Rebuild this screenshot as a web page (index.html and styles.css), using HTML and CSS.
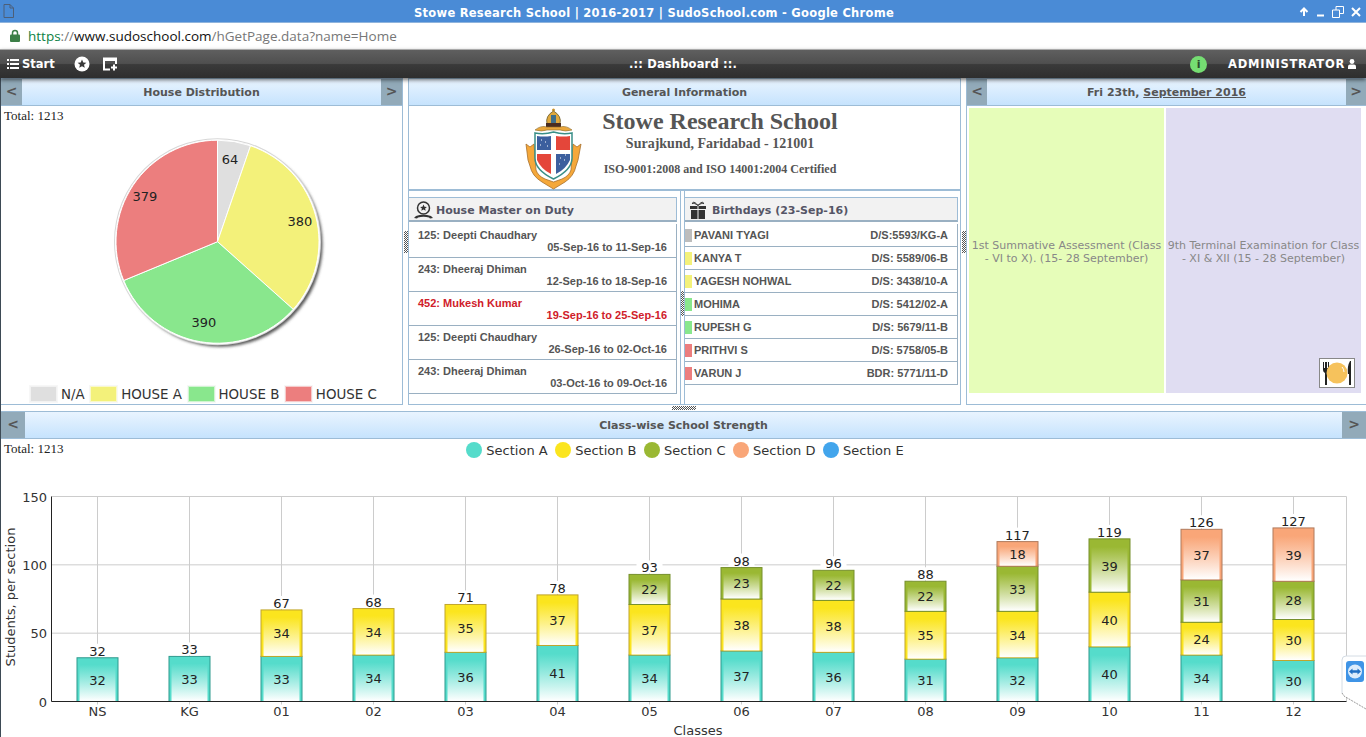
FILE: index.html
```html
<!DOCTYPE html>
<html lang="en">
<head>
  <meta charset="UTF-8" />
  <title>Stowe Research School | 2016-2017 | SudoSchool.com</title>
  <link rel="stylesheet" href="styles.css">
</head>
<body>
  <div class="window-bar">
    <svg class="doc-icon" width="11" height="14" viewBox="0 0 11 14"><path d="M1 .5h6l3.500 3.500v9.500h-9.500zM7 .5v3.500h3.500" fill="none" stroke="#4d5f78"/></svg>
    <span class="window-title">Stowe Research School | 2016-2017 | SudoSchool.com - Google Chrome</span>
    <div class="window-controls">
      <svg width="10" height="10" viewBox="0 0 10 10"><path d="M5 9V2M1.500 5 5 1.500 8.500 5" fill="none" stroke="#fff" stroke-width="2"/></svg>
      <svg width="9" height="10" viewBox="0 0 9 10"><path d="M1 8.500h7" stroke="#fff" stroke-width="2"/></svg>
      <svg width="12" height="12" viewBox="0 0 12 12"><path d="M.5 4h7v7.500h-7zM4 4V.5h7.500v7H7.500" fill="none" stroke="#fff"/></svg>
      <svg width="10" height="10" viewBox="0 0 10 10"><path d="M1 1l8 8M9 1 1 9" stroke="#fff" stroke-width="2"/></svg>
    </div>
  </div>

  <div class="address-bar">
    <svg class="lock" width="10" height="13" viewBox="0 0 10 13"><path d="M2.500 6V4a2.500 2.500 0 0 1 5 0v2" fill="none" stroke="#3c7f47" stroke-width="1.500"/><rect y="5.500" width="10" height="7.500" rx="1" fill="#3c7f47"/></svg>
    <span class="url"><span class="url-scheme">https</span><span class="url-dim">://</span><span class="url-host">www.sudoschool.com</span><span class="url-dim">/hGetPage.data?name=Home</span></span>
  </div>

  <nav class="app-bar">
    <div class="app-left">
      <span class="start">
        <svg width="12" height="10" viewBox="0 0 12 10"><path d="M0 1h2M3 1h9M0 5h2M3 5h9M0 9h2M3 9h9" stroke="#fff" stroke-width="2"/></svg>
        Start
      </span>
      <svg class="fav" width="16" height="16" viewBox="0 0 16 16"><circle cx="8" cy="8" r="7.500" fill="#fff"/><path d="M8 3.600l1.300 2.900 3.100.3-2.400 2 .8 3-2.800-1.600-2.800 1.600.8-3-2.400-2 3.100-.3z" fill="#3a3a3a"/></svg>
      <svg class="newwin" width="15" height="14" viewBox="0 0 15 14"><path d="M7 12.500H1V1.500h12V7" fill="none" stroke="#fff" stroke-width="2"/><path d="M1 2.500h12" stroke="#fff" stroke-width="3"/><path d="M11 7.500v6M8 10.500h6" stroke="#fff" stroke-width="2"/></svg>
    </div>
    <div class="app-title">.:: Dashboard ::.</div>
    <div class="app-right">
      <span class="info-dot">i</span>
      <span class="admin">ADMINISTRATOR</span>
      <svg width="8" height="10" viewBox="0 0 8 10"><circle cx="4" cy="2.500" r="2.400" fill="#fff"/><path d="M0 10V7.500Q0 5.500 2 5.500h4Q8 5.500 8 7.500V10z" fill="#fff"/></svg>
    </div>
  </nav>

  <main class="dashboard">
    <section class="top-row">
      <div class="panel panel-house">
        <header class="panel-head">
          <span class="nav-btn">&lt;</span>
          <span class="panel-title">House Distribution</span>
          <span class="nav-btn">&gt;</span>
        </header>
        <div class="panel-body pie-body">
          <div class="total">Total: 1213</div>
          <svg id="pie" class="pie" width="400" height="248" viewBox="0 123 400 248"></svg>
          <div class="pie-legend">
            <span class="pie-key"><i class="swatch sw-na"></i>N/A</span>
            <span class="pie-key"><i class="swatch sw-a"></i>HOUSE A</span>
            <span class="pie-key"><i class="swatch sw-b"></i>HOUSE B</span>
            <span class="pie-key"><i class="swatch sw-c"></i>HOUSE C</span>
          </div>
        </div>
      </div>

      <div class="resizer"><i class="grip-v"></i></div>

      <div class="panel panel-info">
        <header class="panel-head">
          <span class="panel-title">General Information</span>
        </header>
        <div class="school-banner">
          <svg class="crest" width="58" height="82" viewBox="0 0 58 82">
            <path d="M1 36l4 3 4-3 2 26q2 6 9 9l8.500 3 8.500-3q7-3 9-9l2-26 4 3 4-3-3 16-2 6q-2 10-11 16l-11.500 7-11.500-7Q7 68 5 58l-2-6z" fill="#f5a83a" stroke="#a8702c" stroke-width=".8"/>
            <circle cx="28.500" cy="2" r="1.500" fill="#c8922e"/>
            <path d="M22 16q-2-8 6.500-13 8.500 5 6.500 13z" fill="#e0a83c" stroke="#6a5a2a" stroke-width=".8"/>
            <rect x="26" y="7" width="5" height="9" fill="#3f6f8a"/>
            <rect x="21" y="15" width="15" height="4" fill="#4a2d20"/>
            <path d="M10 22q6-5 12-3h13q6-2 12 3-7 2-12 0H22q-5 2-12 0z" fill="#eaa73c" stroke="#8a6a2a" stroke-width=".6"/>
            <path d="M10 25q9 2 18.500-1 9.500 3 18.500 1v25q0 12-18.500 21Q10 62 10 50z" fill="#fff" stroke="#3a8f88" stroke-width="1.500"/>
            <path d="M12 28q7 1 14 0v14H12z" fill="#3c5f9e"/>
            <path d="M31 28q7 1 14 0v14H31z" fill="#e4463a"/>
            <path d="M12 46h14v20q-10-5-14-14z" fill="#e4463a"/>
            <path d="M31 46h14v6q-4 9-14 14z" fill="#3c5f9e"/>
            <path d="M16 32h1M20 34h1M15 37h1M22 38h1M35 50h1M39 52h1M34 56h1M40 47h1" stroke="#fff" stroke-width="1.200"/>
          </svg>
          <div class="school-text">
            <h1>Stowe Research School</h1>
            <p class="school-place">Surajkund, Faridabad - 121001</p>
            <p class="school-cert">ISO-9001:2008 and ISO 14001:2004 Certified</p>
          </div>
        </div>

        <div class="info-cols">
          <div class="info-col col-duty">
            <h3 class="list-head">
              <svg width="19" height="19" viewBox="0 0 19 19"><circle cx="9.500" cy="7" r="6" fill="none" stroke="#333" stroke-width="1.500"/><path d="M9.500 3.500l1 2.200 2.400.2-1.800 1.500.6 2.300-2.200-1.300-2.200 1.300.6-2.300-1.800-1.500 2.400-.2z" fill="#333"/><path d="M0 17l2-2q7-2.500 15 0l2 2-3 .5-1-1q-5.500-1.500-11 0l-1 1z" fill="#333"/></svg>
              House Master on Duty
            </h3>
            <ul class="duty-list">
              <li><span>125: Deepti Chaudhary</span><span class="dates">05-Sep-16 to 11-Sep-16</span></li>
              <li><span>243: Dheeraj Dhiman</span><span class="dates">12-Sep-16 to 18-Sep-16</span></li>
              <li class="current"><span>452: Mukesh Kumar</span><span class="dates">19-Sep-16 to 25-Sep-16</span></li>
              <li><span>125: Deepti Chaudhary</span><span class="dates">26-Sep-16 to 02-Oct-16</span></li>
              <li><span>243: Dheeraj Dhiman</span><span class="dates">03-Oct-16 to 09-Oct-16</span></li>
            </ul>
          </div>
          <div class="resizer-inner"><i class="grip-v grip-mid"></i></div>
          <div class="info-col col-birth">
            <h3 class="list-head">
              <svg width="18" height="18" viewBox="0 0 18 18"><path d="M1 5h7.500v3H1zM9.500 5H17v3H9.500zM2 9h6.500v9H2zM9.500 9H16v9H9.500z" fill="#333"/><path d="M9 4.500C6 .5 3 .5 3.500 3 4 1.500 7 3 9 4.500zM9 4.500C12 .5 15 .5 14.500 3 14 1.500 11 3 9 4.500z" fill="none" stroke="#333"/></svg>
              Birthdays (23-Sep-16)
            </h3>
            <ul class="birth-list">
              <li><i class="tag sw-grey"></i><span>PAVANI TYAGI</span><span>D/S:5593/KG-A</span></li>
              <li><i class="tag sw-a"></i><span>KANYA T</span><span>D/S: 5589/06-B</span></li>
              <li><i class="tag sw-a"></i><span>YAGESH NOHWAL</span><span>D/S: 3438/10-A</span></li>
              <li><i class="tag sw-b"></i><span>MOHIMA</span><span>D/S: 5412/02-A</span></li>
              <li><i class="tag sw-b"></i><span>RUPESH G</span><span>D/S: 5679/11-B</span></li>
              <li><i class="tag sw-c"></i><span>PRITHVI S</span><span>D/S: 5758/05-B</span></li>
              <li><i class="tag sw-c"></i><span>VARUN J</span><span>BDR: 5771/11-D</span></li>
            </ul>
          </div>
        </div>
      </div>

      <div class="resizer"><i class="grip-v"></i></div>

      <div class="panel panel-cal">
        <header class="panel-head">
          <span class="nav-btn">&lt;</span>
          <span class="panel-title">Fri 23th, <u>September 2016</u></span>
          <span class="nav-btn">&gt;</span>
        </header>
        <div class="cal-body">
          <div class="cal-cell cell-green">1st Summative Assessment (Class - VI to X). (15- 28 September)</div>
          <div class="cal-cell cell-lilac">
            9th Terminal Examination for Class - XI &amp; XII (15 - 28 September)
            <svg class="meal" width="36" height="30" viewBox="0 0 36 30">
              <rect x=".5" y=".5" width="35" height="29" fill="#fff" stroke="#888"/>
              <path d="M4 4v8q0 2 2 3v12h2V15q2-1 2-3V4H9v6H8V4H6v6H5V4z" fill="#222"/>
              <circle cx="18" cy="15" r="10.500" fill="#f6c25c"/>
              <path d="M23 9q2 2 2 5" fill="none" stroke="#fff"/>
              <path d="M31 3q-3 5-2 13h1v11h2V3z" fill="#222"/>
            </svg>
          </div>
        </div>
      </div>
    </section>

    <div class="resizer-h"><i class="grip-h"></i></div>

    <section class="panel panel-strength">
      <header class="panel-head head-wide">
        <span class="nav-btn">&lt;</span>
        <span class="panel-title">Class-wise School Strength</span>
        <span class="nav-btn">&gt;</span>
      </header>
      <div class="chart-top">
        <div class="total">Total: 1213</div>
        <div class="chart-legend">
          <span class="chart-key"><i class="dot dot-a"></i>Section A</span>
          <span class="chart-key"><i class="dot dot-b"></i>Section B</span>
          <span class="chart-key"><i class="dot dot-c"></i>Section C</span>
          <span class="chart-key"><i class="dot dot-d"></i>Section D</span>
          <span class="chart-key"><i class="dot dot-e"></i>Section E</span>
        </div>
      </div>
      <svg id="chart" class="chart" width="1365" height="274" viewBox="1 463 1365 274"></svg>
    </section>
  </main>

  <svg class="tv-tab" width="25" height="56" viewBox="0 0 25 56">
    <path d="M25 1H5Q1 1 1 5v33l2 3 22 13z" fill="#fff"/>
    <path d="M25 1H5Q1 1 1 5v33" fill="none" stroke="#d4dce4"/>
    <path d="M1 38l2 3 22 13" fill="none" stroke="#999" stroke-dasharray="2 1"/>
    <rect x="5" y="6" width="18" height="21" rx="3" fill="#3f94e6"/>
    <circle cx="14" cy="16.500" r="7" fill="#dcecfb"/>
    <path d="M8 16.500l3.500-3v1.800h5v-1.800l3.500 3-3.500 3v-1.800h-5v1.800z" fill="#1f6fc4"/>
  </svg>

  <script src="chart.js"></script>
</body>
</html>
```

FILE: styles.css
```css
* {
  box-sizing: border-box;
}

html, body {
  height: 737px;
}

body {
  margin: 0;
  overflow: hidden;
  background: #fff;
  font-family: "DejaVu Sans", sans-serif;
  color: #555;
  display: flex;
  flex-direction: column;
  position: relative;
}

/* browser chrome */
.window-bar {
  height: 23px;
  flex: none;
  background: #4a8bd6;
  border-bottom: 1px solid #8fb4dd;
  display: flex;
  align-items: center;
  justify-content: center;
  position: relative;
  padding-right: 58px;
  padding-top: 3px;
}

.doc-icon {
  position: absolute;
  left: 3px;
  top: 4px;
}

.window-title {
  color: #fff;
  font-weight: bold;
  font-size: 11.5px;
  letter-spacing: 0.26px;
}

.window-controls {
  position: absolute;
  right: 5px;
  top: 6px;
  display: flex;
  align-items: center;
  gap: 7px;
}

.address-bar {
  height: 26px;
  flex: none;
  background: #fff;
  display: flex;
  align-items: center;
  padding-left: 10px;
  padding-bottom: 1px;
  gap: 8px;
}

.url {
  font-family: "Open Sans", sans-serif;
  font-size: 13.5px;
  color: #777;
}

.url-scheme { color: #0b8043; }
.url-host { color: #111; }
.url-dim { color: #777; }

.app-bar {
  height: 29px;
  flex: none;
  background: linear-gradient(#5f5f5f, #4f4f4f 48%, #3a3a3a 52%, #2e2e2e);
  border-top: 1px solid #aaa;
  box-shadow: 0 2px 4px rgba(0, 0, 0, 0.55);
  display: grid;
  grid-template-columns: 1fr auto 1fr;
  align-items: center;
  color: #fff;
  font-weight: bold;
  font-size: 11.5px;
  position: relative;
  z-index: 2;
}

.app-left {
  display: flex;
  align-items: center;
  padding-left: 7px;
}

.start {
  display: flex;
  align-items: center;
  gap: 3px;
}

.fav { margin-left: 19px; }
.newwin { margin-left: 13px; }

.app-title {
  letter-spacing: 0.16px;
}

.app-right {
  display: flex;
  align-items: center;
  justify-content: flex-end;
  padding-right: 10px;
  gap: 3px;
}

.info-dot {
  width: 17px;
  height: 17px;
  border-radius: 50%;
  background: #75dd72;
  color: #2c4a2c;
  font-size: 11px;
  text-align: center;
  line-height: 17px;
  margin-right: 18px;
}

.admin {
  letter-spacing: 0.72px;
}

/* dashboard */
.dashboard {
  flex: 1;
  min-height: 0;
  display: flex;
  flex-direction: column;
  border-left: 1px solid #3d4a55;
}

.top-row {
  height: 327px;
  flex: none;
  display: flex;
}

.panel {
  border: 1px solid #9dbcd6;
  background: #fff;
  display: flex;
  flex-direction: column;
  min-width: 0;
  position: relative;
}

.panel-house { width: 402px; border-left: 0; }
.panel-info { width: 553px; }
.panel-cal { flex: 1; border-right: 0; }

.panel-head {
  height: 27px;
  flex: none;
  display: flex;
  align-items: stretch;
  background: linear-gradient(#e9f4ff, #c6e3fd);
  border-bottom: 1px solid #9dbcd6;
  font-size: 11px;
  font-weight: bold;
  color: #555;
}

.panel-title {
  flex: 1;
  text-align: center;
  line-height: 27px;
}

.nav-btn {
  width: 21px;
  background: #92aab9;
  color: #555;
  text-align: center;
  font-size: 14px;
  line-height: 25px;
}

.panel-cal .nav-btn {
  width: 20px;
}

.head-wide .nav-btn {
  width: 24px;
}

.resizer {
  width: 5px;
  flex: none;
  display: flex;
  align-items: center;
  justify-content: center;
}

.resizer-inner {
  width: 3px;
  flex: none;
  display: flex;
  align-items: center;
  justify-content: center;
}

.grip-v {
  display: block;
  width: 4px;
  height: 22px;
  flex: none;
  background: repeating-conic-gradient(#555 0 25%, #fff 0 50%) 0 0 / 2px 2px;
}

.grip-mid {
  margin-top: 12px;
  height: 25px;
}

.resizer-h {
  height: 6px;
  flex: none;
  display: flex;
  align-items: center;
  justify-content: center;
}

.grip-h {
  display: block;
  width: 24px;
  height: 4px;
  background: repeating-conic-gradient(#555 0 25%, #fff 0 50%) 0 0 / 2px 2px;
}

.panel-body {
  flex: 1;
  min-height: 0;
}

.total {
  font-family: "Liberation Serif", serif;
  font-size: 13px;
  color: #222;
  padding: 2px 0 0 3px;
  height: 18px;
}

.pie-body {
  display: flex;
  flex-direction: column;
}

.pie {
  display: block;
  flex: none;
}

.pie-legend {
  display: flex;
  justify-content: flex-start;
  margin-top: auto;
  padding: 0 0 2px 29px;
  font-size: 13.4px;
  color: #333;
}

.pie-key {
  display: flex;
  align-items: center;
  margin-right: 5.5px;
}

.swatch {
  display: block;
  width: 27px;
  height: 16px;
  margin-right: 4px;
  border: 1px solid rgba(255, 255, 255, 0.6);
  outline: 1px solid rgba(0, 0, 0, 0.03);
}

.sw-na { background: #dfdfdf; }
.sw-a { background: #f3f17a; }
.sw-b { background: #89e78d; }
.sw-c { background: #ec7e7e; }
.sw-grey { background: #bdbdbd; }

/* general information */
.school-banner {
  height: 85px;
  flex: none;
  border-bottom: 2px solid #9dbcd6;
  display: flex;
  padding-left: 116px;
}

.crest {
  flex: none;
  margin-top: 2px;
}

.school-text {
  margin-left: 17px;
  font-family: "Liberation Serif", serif;
  font-weight: bold;
  color: #555;
  text-align: center;
  width: 240px;
}

.school-text h1 {
  margin: 2px 0 0;
  font-size: 24px;
  line-height: 27px;
}

.school-place {
  margin: 1px 0 0;
  font-size: 14px;
  line-height: 16px;
}

.school-cert {
  margin: 10px 0 0;
  font-size: 12px;
  line-height: 14px;
}

.info-cols {
  flex: 1;
  min-height: 0;
  display: flex;
}

.info-col {
  padding-top: 6px;
}

.col-duty {
  width: 272px;
  border-right: 1px solid #9dbcd6;
}

.col-birth {
  flex: 1;
  border-left: 1px solid #9dbcd6;
  padding-right: 2px;
}

.list-head {
  margin: 0;
  height: 25px;
  border: 1px solid #9dbcd6;
  border-bottom: 2px solid #9ab0c2;
  border-left: 0;
  background: #f2f2f2;
  font-size: 11px;
  font-weight: bold;
  color: #556;
  display: flex;
  align-items: center;
  gap: 3px;
  padding: 2px 0 0 5px;
}

.col-birth .list-head {
  padding-left: 4px;
  gap: 5px;
}

.col-duty .list-head {
  margin-right: 3px;
}

.duty-list, .birth-list {
  list-style: none;
  margin: 2px 0 0;
  padding: 0;
  font-family: "Liberation Sans", sans-serif;
  font-size: 11px;
  font-weight: bold;
  color: #555;
}

.duty-list {
  margin-right: 3px;
}

.duty-list li {
  height: 34px;
  border-bottom: 1px solid #9ab0c2;
  border-right: 1px solid #9ab0c2;
  padding: 5px 9px 0 9px;
  display: flex;
  flex-direction: column;
  line-height: 12px;
}

.dates {
  align-self: flex-end;
}

.duty-list .current {
  color: #d0202a;
}

.birth-list li {
  height: 23px;
  border-bottom: 1px solid #9ab0c2;
  border-right: 1px solid #9ab0c2;
  display: flex;
  align-items: center;
  padding-right: 9px;
}

.tag {
  display: block;
  width: 7px;
  height: 13px;
  margin-right: 2px;
  flex: none;
}

.birth-list li span:nth-child(2) {
  flex: 1;
}

/* calendar */
.cal-body {
  flex: 1;
  min-height: 0;
  display: flex;
  gap: 2px;
  padding: 2px 5px 11px 1px;
}

.cal-cell {
  flex: 1 1 0;
  min-width: 0;
  display: flex;
  align-items: center;
  justify-content: center;
  text-align: center;
  font-size: 11px;
  line-height: 13px;
  color: #888;
  padding-top: 2px;
  position: relative;
}

.cell-green { background: #e6fdb9; margin-left: 1px; }
.cell-lilac { background: #e0ddf2; }

.meal {
  position: absolute;
  right: 6px;
  bottom: 5px;
}

/* class-wise strength */
.panel-strength {
  flex: 1;
  min-height: 0;
  border-right: 0;
  border-left: 0;
  border-bottom: 0;
}

.chart-top {
  height: 24px;
  flex: none;
  display: grid;
  grid-template-columns: 1fr auto 1fr;
}

.chart-legend {
  display: flex;
  font-size: 13px;
  color: #333;
  gap: 7.5px;
  padding: 3px 0 0 3px;
}

.chart-key {
  display: flex;
  align-items: center;
  gap: 4px;
  height: 16px;
}

.dot {
  display: block;
  width: 16px;
  height: 16px;
  border-radius: 50%;
}

.dot-a { background: #55dccb; }
.dot-b { background: #fbe51e; }
.dot-c { background: #9ab833; }
.dot-d { background: #f9a678; }
.dot-e { background: #42a5ec; }

.chart {
  display: block;
  flex: none;
}

.tv-tab {
  position: absolute;
  right: 0;
  top: 655px;
}
```

FILE: chart.js
```js
const NS = "http://www.w3.org/2000/svg";

function el(parent, name, attrs, text) {
  const node = document.createElementNS(NS, name);
  for (const key in attrs) node.setAttribute(key, attrs[key]);
  if (text !== undefined) node.textContent = text;
  parent.appendChild(node);
  return node;
}

function drawPie() {
  const svg = document.getElementById("pie");
  const cx = 216.5, cy = 240.7, r = 101.5;
  const slices = [
    { v: 64, c: "#dfdfdf" },
    { v: 380, c: "#f3f17a" },
    { v: 390, c: "#89e78d" },
    { v: 379, c: "#ec7e7e" }
  ];
  const labels = [[230, 159], [300, 221], [204, 322], [145, 196]];
  const defs = el(svg, "defs", {});
  const blur = el(defs, "filter", { id: "pieShadow", x: "-10%", y: "-10%", width: "125%", height: "125%" });
  el(blur, "feGaussianBlur", { stdDeviation: "1.600" });

  el(svg, "circle", { cx: cx + 3, cy: cy + 3, r: r + 0.5, fill: "#555", filter: "url(#pieShadow)" });
  el(svg, "circle", { cx: cx, cy: cy, r: r + 2, fill: "#d6d6d6" });
  el(svg, "circle", { cx: cx, cy: cy, r: r + 1, fill: "#fff" });

  let angle = 0;
  slices.forEach((s, i) => {
    const next = angle + (s.v / 1213) * Math.PI * 2;
    const x1 = cx + r * Math.sin(angle), y1 = cy - r * Math.cos(angle);
    const x2 = cx + r * Math.sin(next), y2 = cy - r * Math.cos(next);
    const large = next - angle > Math.PI ? 1 : 0;
    el(svg, "path", {
      d: `M${cx} ${cy}L${x1} ${y1}A${r} ${r} 0 ${large} 1 ${x2} ${y2}Z`,
      fill: s.c, stroke: "#fff", "stroke-width": 1
    });
    angle = next;
  });
  slices.forEach((s, i) => {
    el(svg, "text", {
      x: labels[i][0] - 1, y: labels[i][1] + 4, "text-anchor": "middle",
      "font-size": 13, fill: "#222"
    }, s.v);
  });
}

function drawChart() {
  const svg = document.getElementById("chart");
  const sections = [
    { c: "#55dccb", b: "#2f9a8e" },
    { c: "#fbe51e", b: "#c0a52c" },
    { c: "#9ab833", b: "#76902c" },
    { c: "#f9a678", b: "#b07a5c" }
  ];
  const data = [
    ["NS", [32]], ["KG", [33]], ["01", [33, 34]], ["02", [34, 34]],
    ["03", [36, 35]], ["04", [41, 37]], ["05", [34, 37, 22]], ["06", [37, 38, 23]],
    ["07", [36, 38, 22]], ["08", [31, 35, 22]], ["09", [32, 34, 33, 18]],
    ["10", [40, 40, 39]], ["11", [34, 24, 31, 37]], ["12", [30, 30, 28, 39]]
  ];
  const left = 51.5, right = 1346.5, top = 496.5, base = 701.5;
  const unit = (base - top) / 150;

  const defs = el(svg, "defs", {});
  sections.forEach((s, i) => {
    const g = el(defs, "linearGradient", { id: "sec" + i, x1: 0, y1: 0, x2: 0, y2: 1 });
    el(g, "stop", { offset: "0", "stop-color": s.c });
    el(g, "stop", { offset: "0.12", "stop-color": s.c, "stop-opacity": 0.92 });
    el(g, "stop", { offset: "1", "stop-color": "#fff" });
  });

  // grid
  [150, 100, 50].forEach(v => {
    const y = base - v * unit;
    el(svg, "line", { x1: left, x2: right, y1: y, y2: y, stroke: "#ccc" });
  });
  el(svg, "line", { x1: right, x2: right, y1: top, y2: base, stroke: "#ccc" });
  data.forEach((d, i) => {
    const x = 97.5 + i * 92;
    el(svg, "line", { x1: x, x2: x, y1: top, y2: base + 3, stroke: "#ccc" });
  });

  // bars
  data.forEach((d, i) => {
    const cx = 97.5 + i * 92, x = cx - 20.5, w = 41;
    let y = base, total = 0;
    d[1].forEach((v, s) => {
      const h = v * unit;
      y -= h;
      total += v;
      el(svg, "rect", { x: x, y: y, width: w, height: h, fill: sections[s].c, stroke: sections[s].b });
      el(svg, "rect", { x: x + 2.5, y: y + 2, width: w - 5, height: h - 2.5, fill: `url(#sec${s})` });
    });
    d[1].reduce((bottom, v) => {
      const h = v * unit;
      el(svg, "text", {
        x: cx, y: bottom - h / 2 + 5, "text-anchor": "middle", "font-size": 13, fill: "#222"
      }, v);
      return bottom - h;
    }, base);
    el(svg, "rect", { x: cx - 13, y: y - 14, width: 26, height: 13, fill: "#fff" });
    el(svg, "text", { x: cx, y: y - 2, "text-anchor": "middle", "font-size": 13, fill: "#222" }, total);
    el(svg, "text", { x: cx, y: base + 14, "text-anchor": "middle", "font-size": 13, fill: "#333" }, d[0]);
  });

  // axes
  el(svg, "line", { x1: left, x2: left, y1: top, y2: base, stroke: "#222" });
  el(svg, "line", { x1: left, x2: right, y1: base, y2: base, stroke: "#222" });
  [150, 100, 50, 0].forEach(v => {
    el(svg, "text", { x: 47, y: base - v * unit + 5, "text-anchor": "end", "font-size": 13, fill: "#333" }, v);
  });
  el(svg, "text", {
    x: 0, y: 0, "text-anchor": "middle", "font-size": 13, fill: "#333",
    transform: "translate(15 597) rotate(-90)"
  }, "Students, per section");
  el(svg, "text", { x: 698, y: 735, "text-anchor": "middle", "font-size": 13, fill: "#333" }, "Classes");
}

drawPie();
drawChart();
```
